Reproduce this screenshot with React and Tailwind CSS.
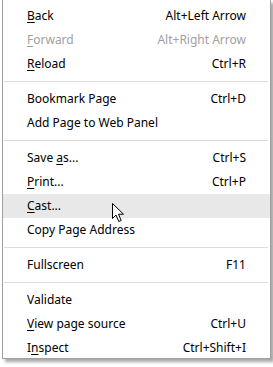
import React from "react";

const U = ({ children }) => <span className="underline underline-offset-[2px] decoration-[1px]">{children}</span>;

function Row({ label, shortcut, disabled, hover }) {
  return (
    <div
      className={`flex items-center justify-between h-[24px] pl-[24px] pr-[24px] ${hover ? "bg-[#e8e8e8]" : ""} ${disabled ? "text-[#a0a0a0]" : "text-[#000000]"}`}
    >
      <span>{label}</span>
      {shortcut && <span>{shortcut}</span>}
    </div>
  );
}

function Sep() {
  return (
    <div className="h-[11px] flex items-center pl-[1px] pr-[2px]">
      <div className="h-px w-full bg-[#dcdcdc]" />
    </div>
  );
}

export default function App() {
  return (
    <div
      className="relative w-[273px] h-[367px] bg-white overflow-hidden text-[12px] leading-none"
      style={{ fontFamily: '"Noto Sans", "Open Sans", sans-serif' }}
    >
      <div className="ml-[2px] w-[269px] h-[359px] bg-white border-l border-r border-b border-[#a0a0a0] pt-[4px] shadow-[3px_3px_3px_rgba(0,0,0,0.35)]">
        <Row label={<><U>B</U>ack</>} shortcut="Alt+Left Arrow" />
        <Row label={<><U>F</U>orward</>} shortcut="Alt+Right Arrow" disabled />
        <Row label={<><U>R</U>eload</>} shortcut="Ctrl+R" />
        <Sep />
        <Row label="Bookmark Page" shortcut="Ctrl+D" />
        <Row label="Add Page to Web Panel" />
        <Sep />
        <Row label={<>Save <U>a</U>s...</>} shortcut="Ctrl+S" />
        <Row label={<><U>P</U>rint...</>} shortcut="Ctrl+P" />
        <Row label={<><U>C</U>ast...</>} hover />
        <Row label="Copy Page Address" />
        <Sep />
        <Row label="Fullscreen" shortcut="F11" />
        <Sep />
        <Row label="Validate" />
        <Row label={<><U>V</U>iew page source</>} shortcut="Ctrl+U" />
        <Row label={<>I<U>n</U>spect</>} shortcut="Ctrl+Shift+I" />
      </div>
      <svg className="absolute left-[111px] top-[202px]" width="14" height="21" viewBox="0 0 14 21">
        <path d="M1.5 1.5 L1.5 16.5 L5 13 L7.8 19.5 L10.2 18.5 L7.5 12.2 L12.5 12.2 Z" fill="white" stroke="black" strokeWidth="1" strokeLinejoin="miter" />
      </svg>
    </div>
  );
}
